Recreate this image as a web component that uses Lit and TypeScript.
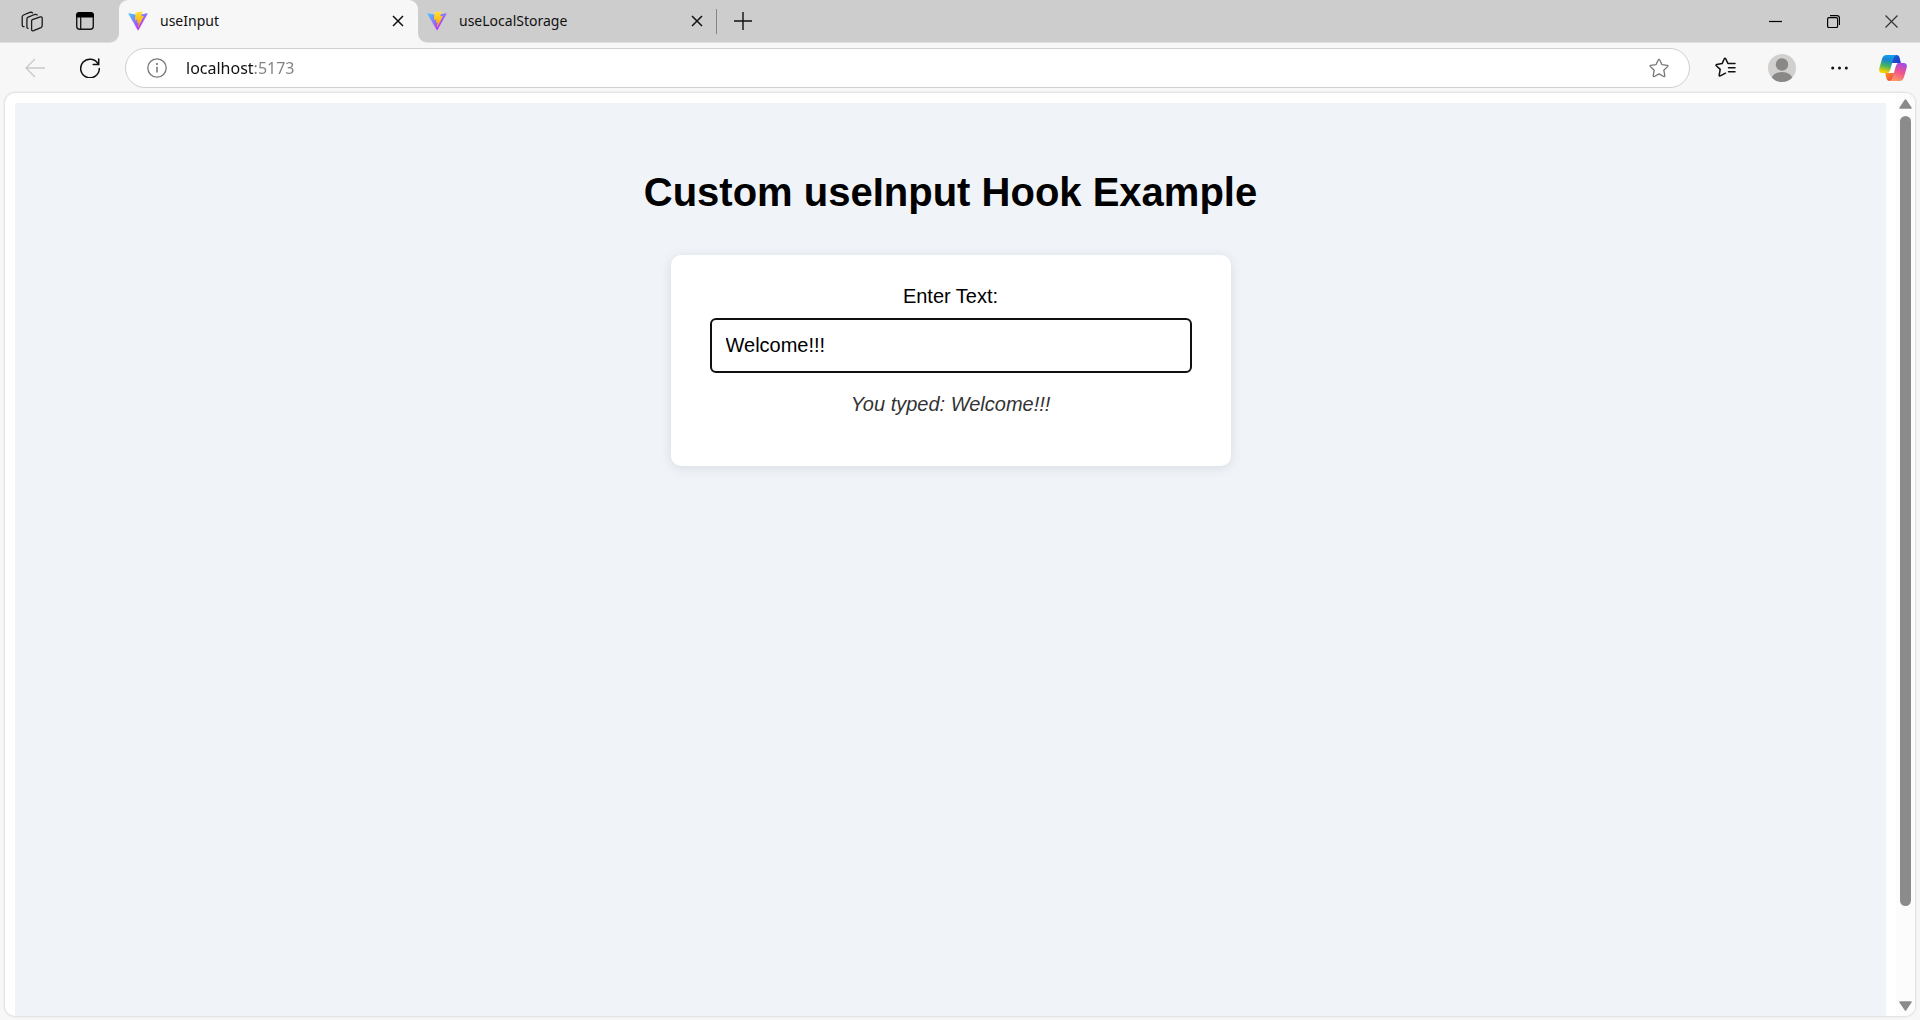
import { LitElement, html, css, svg } from "lit";
import { customElement, property, state } from "lit/decorators.js";

const icons = {
  workspaces: svg`<g fill="none" stroke="#1b1b1b" stroke-width="1.3" stroke-linejoin="round" stroke-linecap="round">
    <path d="M11.4 8.6 19.3 5.9Q21.2 5.4 21.2 7.2V14.6Q21.2 16 20 16.6L12.6 19.7Q10.6 20.3 10.6 18.4V10Q10.6 9 11.4 8.6Z"/>
    <path d="M7.1 17.3Q5.9 17.4 5.9 16V8.2Q5.9 6.8 7.2 6.2L13.6 3.5Q15.5 3 16.2 4"/>
    <path d="M3 15.7Q1.2 15.8 1.2 14V6Q1.2 4.600 2.500 4L8.900 1.400Q10.700 .9 11.500 1.900"/></g>`,
  tabMenu: svg`<rect x="1.700" y="1.700" width="16.600" height="16.600" rx="3" fill="none" stroke="#161616" stroke-width="1.400"/>
    <path d="M1 6.500V4.500Q1 1 4.500 1H15.500Q19 1 19 4.500V6.500Z" fill="#000"/><path d="M5.700 6V18" stroke="#161616" stroke-width="1.300"/>`,
  close: svg`<path d="M1 1 11 11M11 1 1 11" stroke="#111" stroke-width="1.500" fill="none"/>`,
  plus: svg`<path d="M9 0V18M0 9H18" stroke="#111" stroke-width="1.400" fill="none"/>`,
  minimize: svg`<path d="M0 6.500H13" stroke="#000" stroke-width="1.200"/>`,
  restore: svg`<rect x=".6" y="2.600" width="10" height="10" rx="1.500" fill="none" stroke="#000" stroke-width="1.200"/><path d="M3 .7H10Q12.500 .7 12.500 3.200V10" fill="none" stroke="#000" stroke-width="1.200"/>`,
  closeWindow: svg`<path d="M.5 .5 12.500 12.500M12.500 .5 .5 12.500" stroke="#333" stroke-width="1.200" fill="none"/>`,
  back: svg`<path d="M20 10H1M10 1 1 10 10 19" stroke="#c9c9c9" stroke-width="1.400" fill="none"/>`,
  reload: svg`<path d="M18.200 6.100A9.300 9.300 0 1 0 19.300 10.500" fill="none" stroke="#111" stroke-width="1.500" stroke-linecap="round"/><path d="M18.700 1V6.500H13.200" fill="none" stroke="#111" stroke-width="1.500" stroke-linecap="round"/>`,
  info: svg`<circle cx="10" cy="10" r="9.200" fill="none" stroke="#777" stroke-width="1.300"/><path d="M10 8.800V14.500" stroke="#666" stroke-width="1.400"/><circle cx="10" cy="6.100" r="1" fill="#666"/>`,
  star: svg`<path d="M10 1.300Q10.500 1.300 10.800 2L12.900 6.600 18.200 7.300Q19.400 7.600 18.600 8.600L14.800 12.200 15.800 17.600Q15.900 18.900 14.700 18.500L10 15.900 5.300 18.500Q4.100 18.900 4.200 17.600L5.200 12.200 1.400 8.600Q.6 7.600 1.800 7.300L7.100 6.600 9.200 2Q9.500 1.300 10 1.300Z" fill="none" stroke="#767676" stroke-width="1.300" stroke-linejoin="round"/>`,
  favorites: svg`<path d="M10.500 16.200 5.300 18.900Q4.100 19.300 4.200 18L5.200 12.400 1.300 8.800Q.5 7.700 1.700 7.400L7.100 6.600 9.200 2Q10 .7 10.800 2L12.900 6.400H20M13.500 10.700H20M13.500 14.700H20" fill="none" stroke="#111" stroke-width="1.500" stroke-linejoin="round" stroke-linecap="round"/>`,
  profile: svg`<defs><clipPath id="face"><circle cx="14" cy="14" r="14"/></clipPath></defs><circle cx="14" cy="14" r="14" fill="#d2d0ce"/><g clip-path="url(#face)" fill="#8a8886"><circle cx="14" cy="10.500" r="6.200"/><ellipse cx="14" cy="25" rx="10.500" ry="7"/></g>`,
  more: svg`<g fill="#111"><circle cx="1.700" cy="2" r="1.500"/><circle cx="8.500" cy="2" r="1.500"/><circle cx="15.300" cy="2" r="1.500"/></g>`,
  copilot: svg`<defs>
      <linearGradient id="ca" x1=".6" y1="0" x2=".35" y2="1"><stop offset="0" stop-color="#12a0f0"/><stop offset=".3" stop-color="#1686cf"/><stop offset=".62" stop-color="#47b45f"/><stop offset=".95" stop-color="#f5d000"/></linearGradient>
      <linearGradient id="cb" x1=".7" y1="0" x2=".3" y2="1"><stop offset="0" stop-color="#a14be8"/><stop offset=".45" stop-color="#ed528f"/><stop offset="1" stop-color="#ff9c62"/></linearGradient>
      <linearGradient id="cc" x1="0" y1="0" x2="1" y2="1"><stop offset="0" stop-color="#1767d2"/><stop offset="1" stop-color="#2436c9"/></linearGradient>
      <linearGradient id="cd" x1="0" y1="0" x2="1" y2="1"><stop offset="0" stop-color="#ff9c25"/><stop offset="1" stop-color="#e9354b"/></linearGradient></defs>
    <path d="M12 0H17.500Q20 0 20.700 3L22 8.500H11Z" fill="url(#cc)"/>
    <path d="M16 26H10.500Q8 26 7.300 23L6 17.500H17Z" fill="url(#cd)"/>
    <path d="M12.500 8H18.500L15.500 18H9.500Z" fill="#fff"/>
    <path d="M7.500 0H17.500Q15.300 .5 14.400 3.800L11.200 14.800Q10.200 18 7 18H3.500Q-.8 18 .4 13L3 4Q4.200 0 7.500 0Z" fill="url(#ca)"/>
    <path d="M20.500 26H10.500Q12.700 25.500 13.600 22.200L16.800 11.200Q17.800 8 21 8H24.500Q28.800 8 27.600 13L25 22Q23.800 26 20.500 26Z" fill="url(#cb)"/>`,
  vite: svg`<defs><linearGradient id="va" x1="6" y1="33" x2="235" y2="344" gradientUnits="userSpaceOnUse"><stop stop-color="#41d1ff"/><stop offset="1" stop-color="#bd34fe"/></linearGradient>
      <linearGradient id="vb" x1="194.700" y1="8.800" x2="236.100" y2="292.900" gradientUnits="userSpaceOnUse"><stop stop-color="#ffea83"/><stop offset=".083" stop-color="#ffdd35"/><stop offset="1" stop-color="#ffa800"/></linearGradient></defs>
    <path d="M399.600 59.500 215.600 388.500C211.800 395.300 202.100 395.400 198.200 388.600L10.600 59.600C6.300 52.100 12.700 43 21.200 44.600L205.300 77.500C206.500 77.700 207.700 77.700 208.900 77.500L389.100 44.600C397.600 43.100 404 52 399.600 59.500Z" fill="url(#va)"/>
    <path d="M292.900 1.600 156.700 28.300C154.500 28.700 152.800 30.600 152.700 32.900L144.300 174.400C144.100 177.700 147.200 180.300 150.400 179.600L188.300 170.800C191.900 170 195.100 173.100 194.300 176.700L183.100 231.800C182.300 235.500 185.800 238.700 189.400 237.600L212.800 230.500C216.500 229.400 219.900 232.600 219.200 236.300L201.300 323C200.200 328.400 207.400 331.300 210.400 326.700L212.400 323.600 323.400 102.100C325.200 98.400 322 94.200 317.900 94.900L278.900 102.500C275.300 103.200 272.100 99.800 273.200 96.200L298.600 8C299.700 4.400 296.600 .9 292.900 1.600Z" fill="url(#vb)"/>`,
};

type Glyph = keyof typeof icons;

const glyph = (name: Glyph, w: number, h = w, box = `0 0 ${w} ${h}`) =>
  html`<svg width=${w} height=${h} viewBox=${box} aria-hidden="true">${icons[name]}</svg>`;

const reset = css`
  * { box-sizing: border-box; }
  svg { display: block; flex: none; }
  button {
    display: flex;
    align-items: center;
    justify-content: center;
    flex: none;
    margin: 0;
    padding: 0;
    border: 0;
    background: none;
    color: inherit;
    font: inherit;
  }
`;

@customElement("browser-tab")
class BrowserTab extends LitElement {
  @property() label = "";

  static styles = [reset, css`
    :host { display: flex; align-items: center; width: 299px; height: 42px; padding-right: 10px; }
    .page { flex: 1; justify-content: flex-start; gap: 12px; height: 42px; padding-left: 9px; }
    .close { width: 20px; height: 20px; }
  `];

  render() {
    return html`
      <button class="page" role="tab">${glyph("vite", 20, 20, "0 0 410 404")}<span>${this.label}</span></button>
      <button class="close" aria-label="Close tab">${glyph("close", 12)}</button>`;
  }
}

@customElement("browser-toolbar")
class BrowserToolbar extends LitElement {
  static styles = [reset, css`
    :host { display: flex; align-items: center; height: 51px; padding: 0 13px 0 16px; }
    .nav { width: 38px; height: 38px; }
    .nav + .nav { margin-left: 17px; }
    .address {
      display: flex;
      align-items: center;
      flex: 1;
      height: 40px;
      margin: 0 16px;
      padding: 0 20px 0 21px;
      border: 1px solid #cfcfcf;
      border-radius: 20px;
      background: #fff;
    }
    .url {
      flex: 1;
      min-width: 0;
      height: 30px;
      margin: 0 20px 0 19px;
      padding: 0;
      border: 0;
      outline: 0;
      font: 16px "Noto Sans", "Open Sans", sans-serif;
      color: transparent;
      background: linear-gradient(to right, #111 68px, #808080 68px);
      -webkit-background-clip: text;
      background-clip: text;
    }
    .tools { display: flex; align-items: center; }
    .tool { width: 38px; height: 38px; }
    .tool + .tool { margin-left: 19px; }
    .tool.copilot { width: 28px; margin-left: 21px; }
  `];

  render() {
    return html`
      <button class="nav" aria-label="Back">${glyph("back", 20)}</button>
      <button class="nav" aria-label="Refresh">${glyph("reload", 20)}</button>
      <div class="address">
        <button aria-label="View site information">${glyph("info", 20)}</button>
        <input class="url" type="text" aria-label="Address" value="localhost:5173" />
        <button aria-label="Add to favorites">${glyph("star", 20)}</button>
      </div>
      <div class="tools">
        <button class="tool" aria-label="Favorites">${glyph("favorites", 21)}</button>
        <button class="tool" aria-label="Profile">${glyph("profile", 28)}</button>
        <button class="tool" aria-label="Settings and more">${glyph("more", 17, 4)}</button>
        <button class="tool copilot" aria-label="Copilot">${glyph("copilot", 28, 26)}</button>
      </div>`;
  }
}

@customElement("input-example")
class InputExample extends LitElement {
  @state() private text = "Welcome!!!";

  static styles = css`
    * { box-sizing: border-box; }
    :host {
      display: flex;
      flex-direction: column;
      align-items: center;
      background: #f0f4f8;
      padding: 66px 20px 20px;
      font: 20px/24px "Liberation Sans", Arial, sans-serif;
      color: #000;
    }
    h1 { margin: 0 0 40px; font-size: 40px; line-height: 46px; }
    .card {
      display: flex;
      flex-direction: column;
      align-items: center;
      width: 560px;
      max-width: 100%;
      padding: 29px 39px 50px;
      border-radius: 10px;
      background: #fff;
      box-shadow: 0 2px 12px rgba(0, 0, 0, 0.1);
    }
    .field {
      width: 100%;
      height: 55px;
      margin: 10px 0 19px;
      padding: 0 14px;
      border: 2px solid #101010;
      border-radius: 6px;
      outline: 0;
      background: #fff;
      font: inherit;
      color: #000;
    }
    .typed { margin: 0; font-style: italic; color: #333; }
  `;

  render() {
    return html`
      <h1>Custom useInput Hook Example</h1>
      <div class="card">
        <label for="text">Enter Text:</label>
        <input id="text" class="field" type="text" .value=${this.text}
          @input=${(e: Event) => { this.text = (e.target as HTMLInputElement).value; }} />
        <p class="typed">You typed: ${this.text}</p>
      </div>`;
  }
}

@customElement("app-root")
class AppRoot extends LitElement {
  static styles = [reset, css`
    :host {
      display: flex;
      flex-direction: column;
      height: 100vh;
      background: #f7f7f7;
      font: 14px/20px "Noto Sans", "Open Sans", sans-serif;
      color: #111;
    }
    .strip { display: flex; height: 42px; flex: none; }
    .lead, .rest { display: flex; align-items: center; background: #cdcdcd; box-shadow: 0 1px 0 #e0e0e0; }
    .lead { gap: 32px; padding: 0 24px 0 21px; border-bottom-right-radius: 9px; }
    .slot { background: #cdcdcd; }
    .active { background: #f7f7f7; border-radius: 9px 9px 0 0; }
    .rest { flex: 1; border-bottom-left-radius: 9px; }
    .divider { width: 1px; height: 25px; margin-left: -1px; background: #858585; }
    .add { width: 36px; height: 36px; margin-left: 8px; }
    .window { display: flex; margin-left: auto; }
    .window button { width: 58px; height: 42px; }
    .frame {
      display: flex;
      flex: 1;
      min-height: 0;
      margin: 0 5px 4px;
      overflow: hidden;
      border-radius: 10px;
      background: #fff;
      box-shadow: 0 0 2px 1px #dedede;
    }
    .view { flex: 1; min-width: 0; display: flex; padding: 10px 10px 0; }
    .view input-example { flex: 1; }
    .scroll {
      display: flex;
      flex-direction: column;
      align-items: center;
      gap: 7px;
      width: 19px;
      padding: 6px 0 5px;
      background: #fcfcfc;
    }
    .track { flex: 1; width: 11px; }
    .thumb { height: 90%; border-radius: 6px; background: #8b8b8b; }
  `];

  render() {
    return html`
      <header>
        <div class="strip">
          <div class="lead">
            <button aria-label="Workspaces">${glyph("workspaces", 22, 21)}</button>
            <button aria-label="Tab actions menu">${glyph("tabMenu", 20)}</button>
          </div>
          <div class="slot"><browser-tab class="active" label="useInput"></browser-tab></div>
          <div class="rest">
            <browser-tab label="useLocalStorage"></browser-tab>
            <span class="divider"></span>
            <button class="add" aria-label="New tab">${glyph("plus", 18)}</button>
            <div class="window">
              <button aria-label="Minimize">${glyph("minimize", 13)}</button>
              <button aria-label="Restore">${glyph("restore", 13)}</button>
              <button aria-label="Close window">${glyph("closeWindow", 13)}</button>
            </div>
          </div>
        </div>
        <browser-toolbar></browser-toolbar>
      </header>
      <main class="frame">
        <div class="view"><input-example></input-example></div>
        <div class="scroll" aria-hidden="true">
          <svg width="13" height="10" viewBox="0 0 13 10"><path d="M6.500 1 12 9H1Z" fill="#8b8b8b" stroke="#8b8b8b" stroke-width="1.500" stroke-linejoin="round"/></svg>
          <div class="track"><div class="thumb"></div></div>
          <svg width="13" height="10" viewBox="0 0 13 10"><path d="M6.500 9 12 1H1Z" fill="#8b8b8b" stroke="#8b8b8b" stroke-width="1.500" stroke-linejoin="round"/></svg>
        </div>
      </main>`;
  }
}
